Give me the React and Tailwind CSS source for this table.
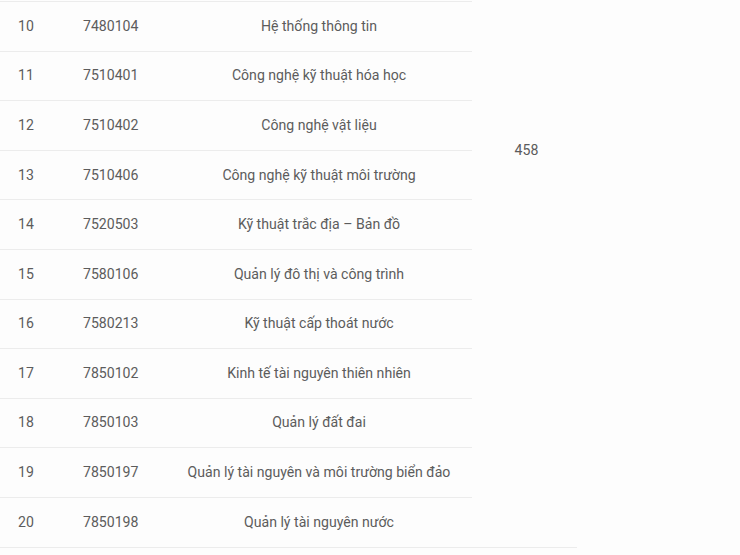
import React from "react";

const rows = [
  ["10", "7480104", "Hệ thống thông tin"],
  ["11", "7510401", "Công nghệ kỹ thuật hóa học"],
  ["12", "7510402", "Công nghệ vật liệu"],
  ["13", "7510406", "Công nghệ kỹ thuật môi trường"],
  ["14", "7520503", "Kỹ thuật trắc địa – Bản đồ"],
  ["15", "7580106", "Quản lý đô thị và công trình"],
  ["16", "7580213", "Kỹ thuật cấp thoát nước"],
  ["17", "7850102", "Kinh tế tài nguyên thiên nhiên"],
  ["18", "7850103", "Quản lý đất đai"],
  ["19", "7850197", "Quản lý tài nguyên và môi trường biển đảo"],
  ["20", "7850198", "Quản lý tài nguyên nước"],
];

export default function App() {
  return (
    <div className="w-[740px] h-[555px] bg-[#fdfdfd] overflow-hidden pt-px" style={{ fontFamily: "Roboto, 'Noto Sans', sans-serif" }}>
      <table className="border-collapse text-[14.1px] text-[#5c5c5c] w-[577px] table-fixed">
        <colgroup>
          <col className="w-[65px]" />
          <col className="w-[101px]" />
          <col className="w-[306px]" />
          <col className="w-[105px]" />
        </colgroup>
        <tbody>
          {rows.map((r, i) => {
            const top = i === 0 ? "border-t border-t-[#ececec]" : "";
            return (
              <tr key={r[0]} className="h-[49.6px]">
                <td className={`pl-[18px] border-b border-[#ececec] ${top}`}>{r[0]}</td>
                <td className={`pl-[18px] border-b border-[#ececec] ${top}`}>{r[1]}</td>
                <td className={`text-center border-b border-[#ececec] ${top}`}>{r[2]}</td>
                {i === 0 && (
                  <td rowSpan={11} className="border-b border-[#ececec] align-top pt-[138px] pl-[4px] text-center">
                    458
                  </td>
                )}
              </tr>
            );
          })}
        </tbody>
      </table>
    </div>
  );
}
